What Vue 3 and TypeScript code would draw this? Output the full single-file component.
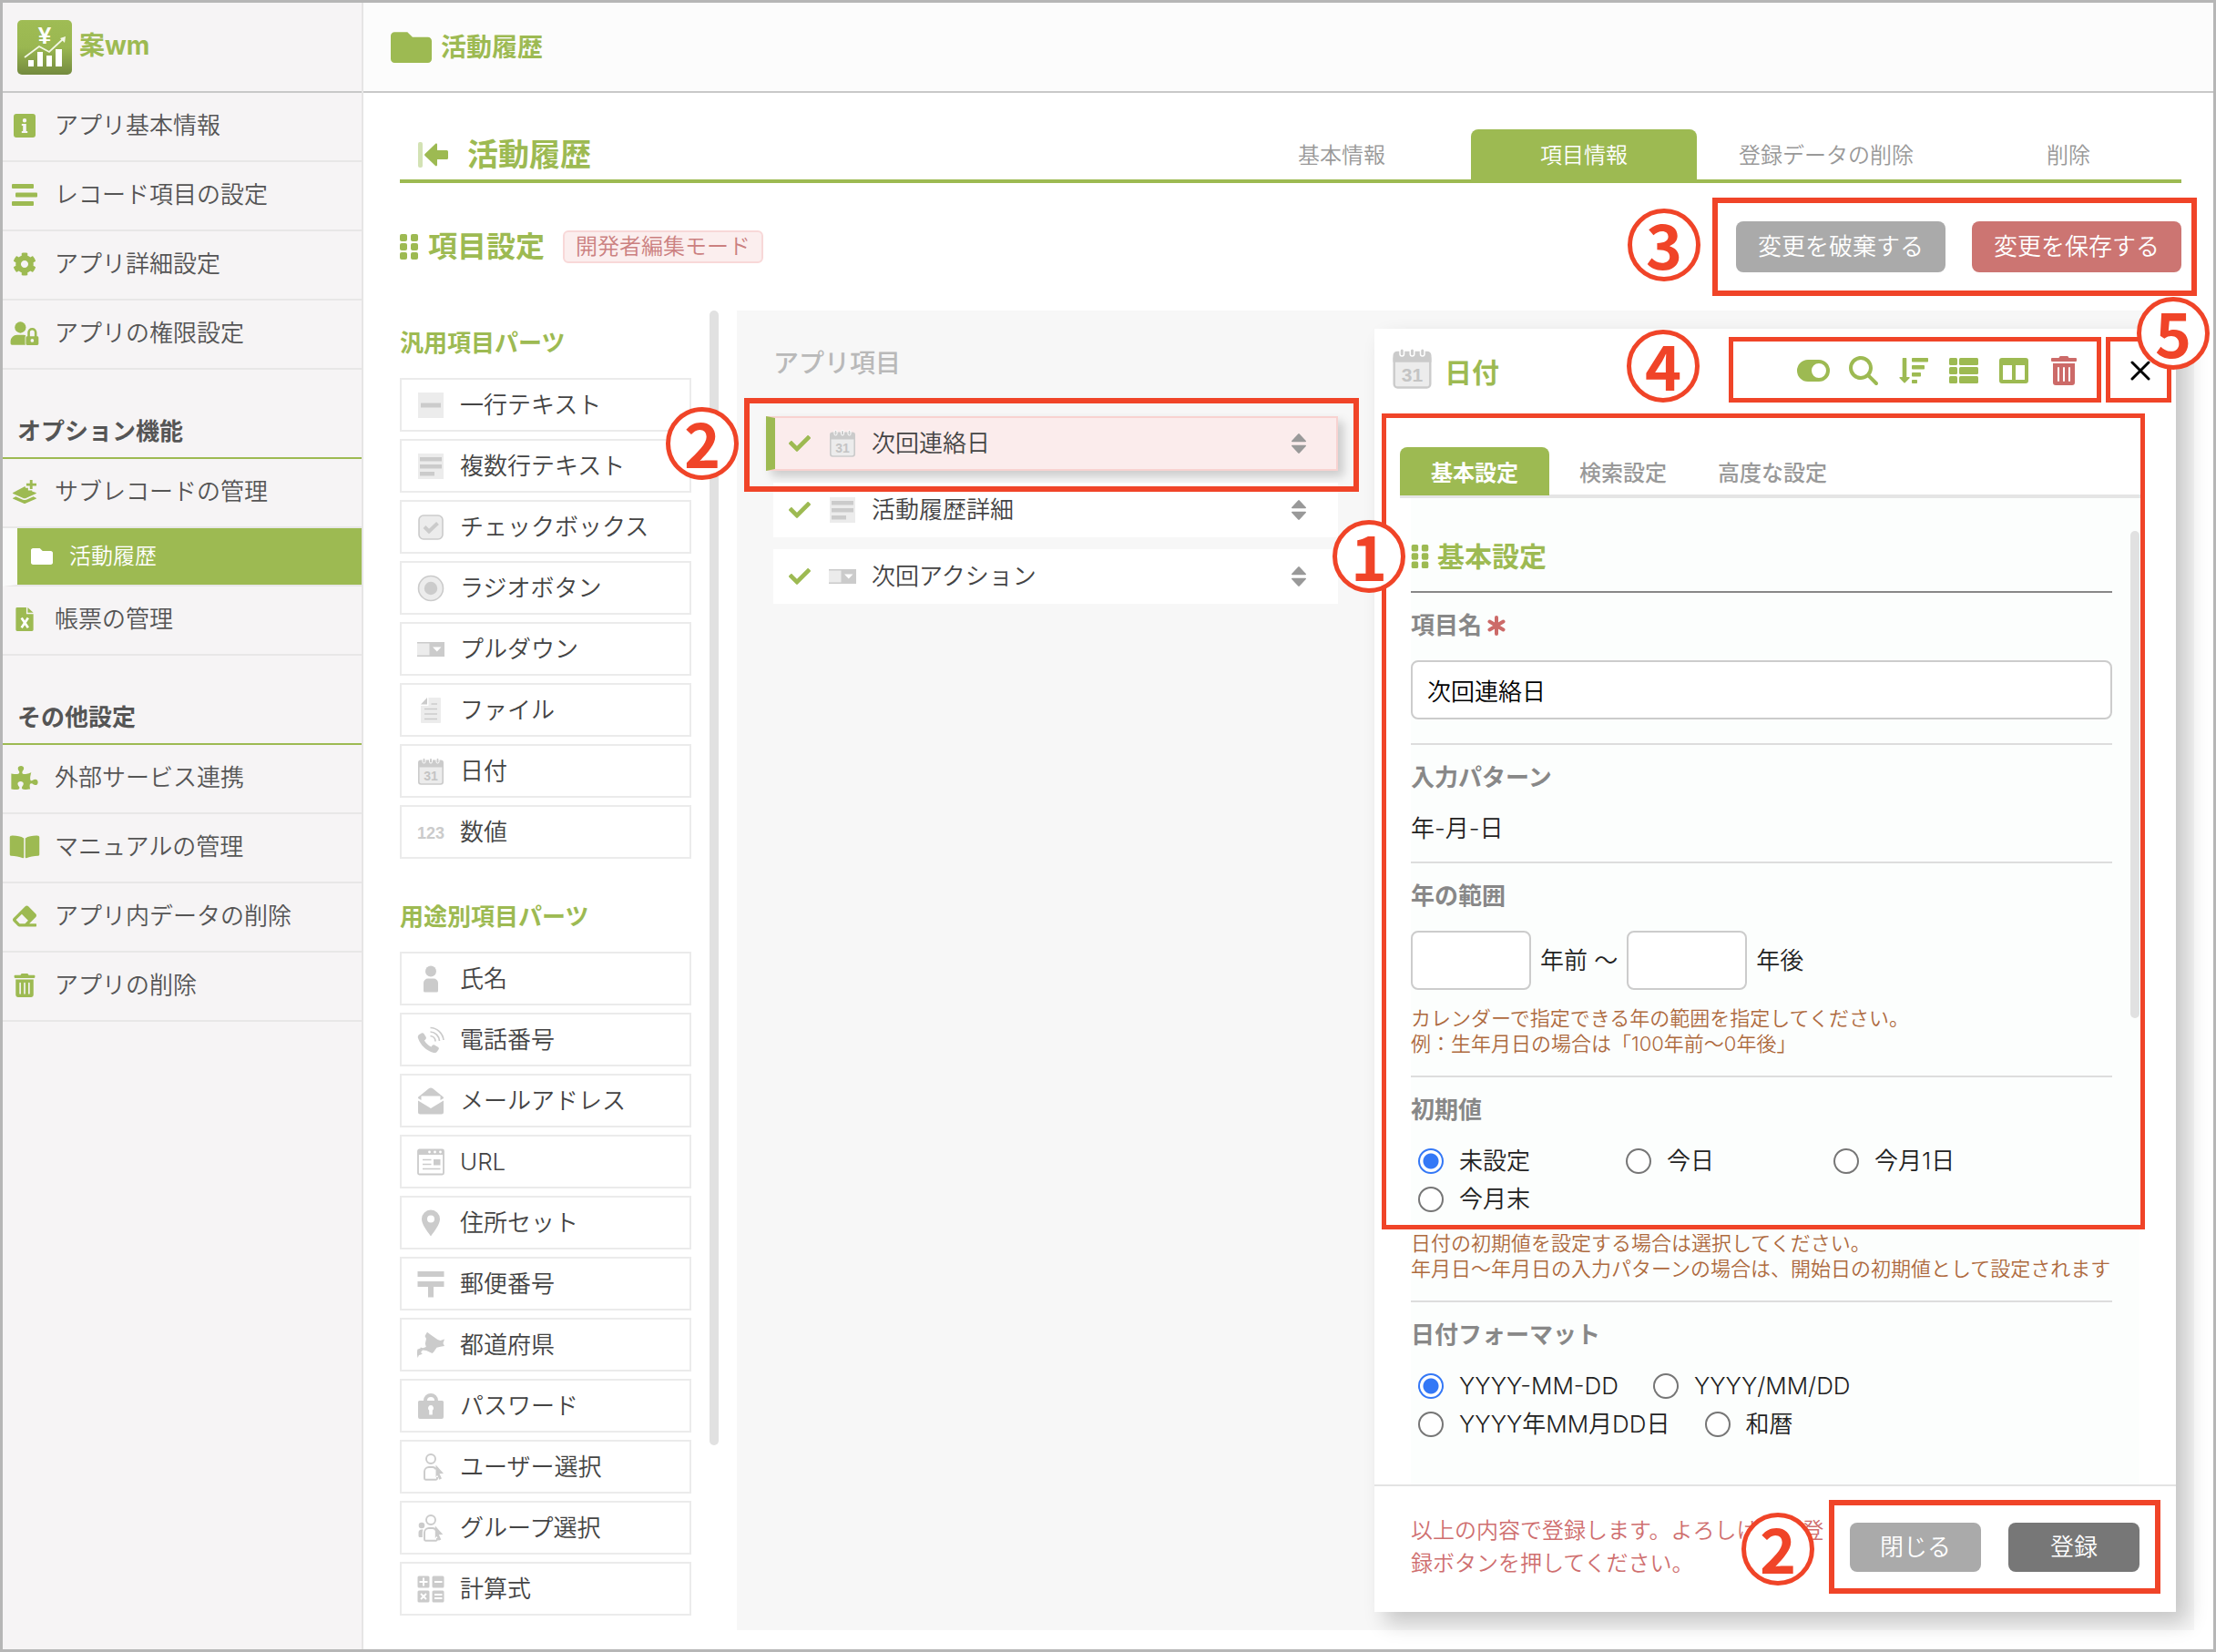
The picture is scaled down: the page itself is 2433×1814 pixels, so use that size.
<script setup lang="ts">
import { ref } from 'vue'

interface Item {
  icon: string
  label: string
}

const basicMenu: Item[] = [
  { icon: 'info', label: 'アプリ基本情報' },
  { icon: 'stream', label: 'レコード項目の設定' },
  { icon: 'cog', label: 'アプリ詳細設定' },
  { icon: 'user-lock', label: 'アプリの権限設定' },
]

const otherMenu: Item[] = [
  { icon: 'puzzle', label: '外部サービス連携' },
  { icon: 'book', label: 'マニュアルの管理' },
  { icon: 'eraser', label: 'アプリ内データの削除' },
  { icon: 'trash', label: 'アプリの削除' },
]

const pageTabs = ['基本情報', '項目情報', '登録データの削除', '削除']
const panelTabs = ['基本設定', '検索設定', '高度な設定']

const partGroups: { title: string; items: Item[] }[] = [
  {
    title: '汎用項目パーツ',
    items: [
      { icon: 'p-text', label: '一行テキスト' },
      { icon: 'p-textarea', label: '複数行テキスト' },
      { icon: 'p-check', label: 'チェックボックス' },
      { icon: 'p-radio', label: 'ラジオボタン' },
      { icon: 'p-select', label: 'プルダウン' },
      { icon: 'p-file', label: 'ファイル' },
      { icon: 'p-date', label: '日付' },
      { icon: 'p-number', label: '数値' },
    ],
  },
  {
    title: '用途別項目パーツ',
    items: [
      { icon: 'p-person', label: '氏名' },
      { icon: 'p-phone', label: '電話番号' },
      { icon: 'p-mail', label: 'メールアドレス' },
      { icon: 'p-url', label: 'URL' },
      { icon: 'p-pin', label: '住所セット' },
      { icon: 'p-post', label: '郵便番号' },
      { icon: 'p-map', label: '都道府県' },
      { icon: 'p-lock', label: 'パスワード' },
      { icon: 'p-user', label: 'ユーザー選択' },
      { icon: 'p-group', label: 'グループ選択' },
      { icon: 'p-calc', label: '計算式' },
    ],
  },
]

const fields: Item[] = [
  { icon: 'p-date', label: '次回連絡日' },
  { icon: 'p-textarea', label: '活動履歴詳細' },
  { icon: 'p-select', label: '次回アクション' },
]

const tools: Item[] = [
  { icon: 'toggle', label: '表示切替' },
  { icon: 'search', label: '検索' },
  { icon: 'sort-down', label: '並び替え' },
  { icon: 'list', label: '一覧' },
  { icon: 'columns', label: '列' },
  { icon: 'trash', label: '削除' },
]

const initialOptions = ['未設定', '今日', '今月1日', '今月末']
const formatOptions = ['YYYY-MM-DD', 'YYYY/MM/DD', 'YYYY年MM月DD日', '和暦']

const fieldName = ref('次回連絡日')
const yearsBefore = ref('')
const yearsAfter = ref('')
const initialValue = ref('未設定')
const dateFormat = ref('YYYY-MM-DD')
</script>

<template>
  <svg class="sprite" aria-hidden="true">
    <symbol id="info" viewBox="0 0 24 26">
      <path fill="currentColor" fill-rule="evenodd" d="M3 0h18a3 3 0 0 1 3 3v20a3 3 0 0 1-3 3H3a3 3 0 0 1-3-3V3a3 3 0 0 1 3-3zM12 5a2.200 2.200 0 1 0 0 4.400A2.200 2.200 0 0 0 12 5zM8.800 11v2h1.400v6H8.800v2h6.400v-2h-1.400v-8z" />
    </symbol>
    <symbol id="stream" viewBox="0 0 28 26">
      <g fill="currentColor">
        <rect x="0" y="1" width="24" height="5" rx="1" />
        <rect x="4" y="10.500" width="24" height="5" rx="1" />
        <rect x="0" y="20" width="24" height="5" rx="1" />
      </g>
    </symbol>
    <symbol id="cog" viewBox="0 0 512 512">
      <path fill="currentColor" d="M487.400 315.700l-42.600-24.600c4.300-23.200 4.300-47 0-70.200l42.600-24.600c4.900-2.800 7.100-8.600 5.500-14-11.100-35.600-30-67.800-54.700-94.600-3.800-4.100-10-5.100-14.800-2.300L380.800 110c-17.900-15.400-38.500-27.300-60.800-35.100V25.800c0-5.600-3.900-10.500-9.400-11.700-36.700-8.200-74.300-7.800-109.200 0-5.500 1.200-9.400 6.100-9.400 11.700V75c-22.200 7.900-42.800 19.800-60.800 35.100L88.700 85.500c-4.900-2.800-11-1.900-14.800 2.300-24.700 26.700-43.600 58.900-54.700 94.600-1.700 5.400.6 11.200 5.500 14L67.300 221c-4.300 23.200-4.300 47 0 70.200l-42.600 24.600c-4.900 2.800-7.100 8.600-5.500 14 11.100 35.600 30 67.800 54.700 94.600 3.800 4.100 10 5.100 14.800 2.300l42.600-24.600c17.900 15.400 38.500 27.300 60.800 35.100v49.200c0 5.600 3.900 10.500 9.400 11.700 36.700 8.200 74.300 7.800 109.200 0 5.500-1.200 9.400-6.100 9.400-11.700v-49.200c22.200-7.900 42.800-19.800 60.800-35.100l42.600 24.600c4.900 2.800 11 1.900 14.800-2.300 24.700-26.700 43.600-58.900 54.700-94.600 1.500-5.500-.7-11.300-5.600-14.100zM256 336c-44.100 0-80-35.900-80-80s35.900-80 80-80 80 35.900 80 80-35.900 80-80 80z" />
    </symbol>
    <symbol id="user-lock" viewBox="0 0 34 28">
      <g fill="currentColor">
        <circle cx="12" cy="7" r="6.600" />
        <path d="M8 16h8c1 0 1.800.3 2.400.8-.5.600-.8 1.400-.8 2.200V26c0 .700.100 1.100.400 1.600H2A1.600 1.600 0 0 1 .4 26v-3A7.500 7.500 0 0 1 8 16z" />
        <path fill-rule="evenodd" d="M20.500 17.500V13a5.500 5.500 0 0 1 11 0v4.500h.5a1.500 1.500 0 0 1 1.500 1.500v7.500a1.500 1.500 0 0 1-1.500 1.500H20a1.500 1.500 0 0 1-1.500-1.500V19a1.500 1.500 0 0 1 1.500-1.500zM23.300 17.500h5.400V13a2.700 2.700 0 0 0-5.400 0zM26 20.500a2 2 0 1 0 0 4 2 2 0 0 0 0-4z" />
      </g>
    </symbol>
    <symbol id="layer-plus" viewBox="0 0 28 27">
      <g fill="currentColor">
        <path d="M20 0h3v3.800h4.500v3H23v3.700h-3V6.800h-4v-3h4z" />
        <path d="M14 7.500l1 .400V9h3v3h4.500v1l4.500 1.500a.7.700 0 0 1 0 1.200l-12 5.200a2.600 2.600 0 0 1-2 0L.8 15.700a.7.700 0 0 1 0-1.200z" />
        <path d="M4 19l8 3.500c1.300.5 2.700.5 4 0l8-3.500 3 1.400a.7.700 0 0 1 0 1.200l-12 5.200a2.600 2.600 0 0 1-2 0L1 21.600a.7.700 0 0 1 0-1.200z" />
      </g>
    </symbol>
    <symbol id="folder" viewBox="0 64 512 384">
      <path fill="currentColor" d="M464 128H272l-64-64H48C21.490 64 0 85.490 0 112v288c0 26.510 21.490 48 48 48h416c26.510 0 48-21.490 48-48V176c0-26.510-21.490-48-48-48z" />
    </symbol>
    <symbol id="file-x" viewBox="0 0 20 27">
      <path fill="currentColor" d="M1.500 0H12v7.500h8v18a1.500 1.500 0 0 1-1.500 1.500h-17A1.500 1.500 0 0 1 0 25.500v-24A1.500 1.500 0 0 1 1.500 0zM13.500 0L20 6h-6.500z" />
      <path fill="none" stroke="#fff" stroke-width="2.800" d="M6.500 12l7.500 11M14 12L6.500 23" />
    </symbol>
    <symbol id="puzzle" viewBox="0 0 576 512">
      <path fill="currentColor" d="M519.442 288.651c-41.519 0-59.500 31.593-82.058 31.593C377.409 320.244 432 144 432 144s-196.288 80-196.288-3.297c0-35.827 36.288-46.250 36.288-85.985C272 19.216 243.885 0 210.539 0c-34.654 0-66.366 18.891-66.366 56.346 0 41.364 31.711 59.277 31.711 81.750C175.885 207.719 0 166.758 0 166.758v333.237s178.635 41.047 178.635-28.662c0-22.473-40-40.107-40-81.471 0-37.456 29.250-56.346 63.577-56.346 33.673 0 61.788 19.216 61.788 54.717 0 39.735-36.288 50.158-36.288 85.985 0 60.803 129.675 25.730 181.230 25.730 0 0-34.725-120.101 25.827-120.101 35.962 0 46.423 36.152 86.308 36.152C556.712 416 576 387.990 576 354.443c0-34.199-18.962-65.792-56.558-65.792z" />
    </symbol>
    <symbol id="book" viewBox="0 0 30 24">
      <path fill="currentColor" d="M14.300 3.200C11 1 6 .4 1.500.6.700.6 0 1.200 0 2v17.500c0 .8.6 1.400 1.400 1.400 4 .1 8.600.7 11.800 2.300.5.200 1.100-.1 1.100-.7zM15.700 3.200C19 1 24 .4 28.500.6c.8 0 1.500.6 1.500 1.400v17.500c0 .8-.6 1.400-1.400 1.400-4 .1-8.600.7-11.800 2.300-.5.200-1.100-.1-1.100-.7z" />
    </symbol>
    <symbol id="eraser" viewBox="0 0 512 512">
      <path fill="currentColor" d="M497.941 273.941c18.745-18.745 18.745-49.137 0-67.882l-160-160c-18.745-18.745-49.136-18.746-67.883 0l-256 256c-18.745 18.745-18.745 49.137 0 67.882l96 96A48.004 48.004 0 0 0 144 480h356c6.627 0 12-5.373 12-12v-40c0-6.627-5.373-12-12-12H355.883l142.058-142.059zm-302.627-62.627l137.373 137.373L265.373 416H150.628l-80-80 124.686-124.686z" />
    </symbol>
    <symbol id="trash" viewBox="0 0 448 512">
      <path fill="currentColor" d="M32 464a48 48 0 0 0 48 48h288a48 48 0 0 0 48-48V128H32zm272-256a16 16 0 0 1 32 0v224a16 16 0 0 1-32 0zm-96 0a16 16 0 0 1 32 0v224a16 16 0 0 1-32 0zm-96 0a16 16 0 0 1 32 0v224a16 16 0 0 1-32 0zM432 32H312l-9.400-18.700A24 24 0 0 0 281.100 0H166.800a23.720 23.720 0 0 0-21.400 13.300L136 32H16A16 16 0 0 0 0 48v32a16 16 0 0 0 16 16h416a16 16 0 0 0 16-16V48a16 16 0 0 0-16-16z" />
    </symbol>
    <symbol id="back" viewBox="0 0 34 28">
      <rect x="0" y="0" width="5" height="28" rx="2" fill="#d3e2b4" />
      <path fill="currentColor" d="M7.500 13L19 2c1-.8 2-.3 2 1v6h10.500A1.500 1.500 0 0 1 33 10.500v7a1.500 1.500 0 0 1-1.500 1.500H21v6c0 1.300-1 1.800-2 1L7.500 15a1.400 1.400 0 0 1 0-2z" />
    </symbol>
    <symbol id="grip" viewBox="0 0 20 28">
      <g fill="currentColor">
        <rect x="0" y="0" width="8" height="8" rx="2" />
        <rect x="12" y="0" width="8" height="8" rx="2" />
        <rect x="0" y="10" width="8" height="8" rx="2" />
        <rect x="12" y="10" width="8" height="8" rx="2" />
        <rect x="0" y="20" width="8" height="8" rx="2" />
        <rect x="12" y="20" width="8" height="8" rx="2" />
      </g>
    </symbol>
    <symbol id="check" viewBox="0 64 512 384">
      <path fill="currentColor" d="M173.898 439.404l-166.400-166.400c-9.997-9.997-9.997-26.206 0-36.204l36.203-36.204c9.997-9.998 26.207-9.998 36.204 0L192 312.690 432.095 72.596c9.997-9.997 26.207-9.997 36.204 0l36.203 36.204c9.997 9.997 9.997 26.206 0 36.204l-294.400 294.401c-9.998 9.997-26.207 9.997-36.204-.001z" />
    </symbol>
    <symbol id="sort" viewBox="0 0 16 22">
      <path fill="currentColor" d="M7.200.5a1.100 1.100 0 0 1 1.600 0l7 7.400c.5.600.1 1.300-.6 1.300H.8C.1 9.200-.3 8.500.2 7.900zM7.200 21.500a1.100 1.100 0 0 0 1.600 0l7-7.400c.5-.6.1-1.300-.6-1.300H.8c-.7 0-1.100.7-.6 1.300z" />
    </symbol>
    <symbol id="toggle" viewBox="0 0 36 32">
      <path fill="currentColor" fill-rule="evenodd" d="M12 4h12a12 12 0 0 1 0 24H12a12 12 0 0 1 0-24zm12 4a8 8 0 1 0 0 16 8 8 0 0 0 0-16z" />
    </symbol>
    <symbol id="search" viewBox="0 0 512 512">
      <path fill="currentColor" d="M416 208c0 45.900-14.900 88.300-40 122.700L502.600 457.400c12.500 12.500 12.500 32.800 0 45.300s-32.800 12.500-45.300 0L330.700 376c-34.400 25.200-76.800 40-122.700 40C93.100 416 0 322.900 0 208S93.100 0 208 0s208 93.100 208 208zM208 352a144 144 0 1 0 0-288 144 144 0 1 0 0 288z" />
    </symbol>
    <symbol id="sort-down" viewBox="0 0 32 32">
      <g fill="currentColor">
        <path d="M4.500 2h3a.8.800 0 0 1 .8.800V23h2.700c.7 0 1 .8.500 1.300l-4.800 5c-.4.400-.9.400-1.300 0l-4.800-5c-.5-.5-.2-1.300.5-1.300h2.600V2.800a.8.800 0 0 1 .8-.8z" />
        <rect x="14" y="2" width="18" height="4.500" rx=".8" />
        <rect x="14" y="10" width="14" height="4.500" rx=".8" />
        <rect x="14" y="18" width="10" height="4.500" rx=".8" />
        <rect x="14" y="26" width="6" height="4" rx=".8" />
      </g>
    </symbol>
    <symbol id="list" viewBox="0 0 32 32">
      <g fill="currentColor">
        <rect x="0" y="2" width="9" height="8" rx="1.500" />
        <rect x="0" y="12" width="9" height="8" rx="1.500" />
        <rect x="0" y="22" width="9" height="8" rx="1.500" />
        <rect x="11" y="2" width="21" height="8" rx="1.500" />
        <rect x="11" y="12" width="21" height="8" rx="1.500" />
        <rect x="11" y="22" width="21" height="8" rx="1.500" />
      </g>
    </symbol>
    <symbol id="columns" viewBox="0 0 32 32">
      <path fill="currentColor" fill-rule="evenodd" d="M3 2h26a3 3 0 0 1 3 3v22a3 3 0 0 1-3 3H3a3 3 0 0 1-3-3V5a3 3 0 0 1 3-3zM4 10v16h10V10zM18 10v16h10V10z" />
    </symbol>
    <symbol id="times" viewBox="0 0 22 22">
      <path fill="none" stroke="currentColor" stroke-width="3" stroke-linecap="round" d="M2 2l18 18M20 2L2 20" />
    </symbol>
    <symbol id="asterisk" viewBox="0 0 20 22">
      <path fill="none" stroke="currentColor" stroke-width="4" stroke-linecap="round" d="M10 2v18M2.500 6.500l15 9M17.500 6.500l-15 9" />
    </symbol>

    <symbol id="p-text" viewBox="0 0 30 30">
      <rect x="1" y="1" width="28" height="28" fill="#ececec" />
      <rect x="4" y="12.500" width="22" height="5" fill="#cbcbcb" />
    </symbol>
    <symbol id="p-textarea" viewBox="0 0 30 30">
      <rect x="1" y="1" width="28" height="28" fill="#ececec" />
      <path fill="#cbcbcb" d="M3 5h24v4.500H3zM3 13h24v4.500H3zM3 21h16v4.500H3z" />
    </symbol>
    <symbol id="p-check" viewBox="0 0 30 30">
      <rect x="2" y="2" width="26" height="26" rx="5" fill="#ececec" stroke="#cbcbcb" stroke-width="1.600" />
      <path fill="none" stroke="#cbcbcb" stroke-width="4" d="M8 14.500l5 5 9.500-9" />
    </symbol>
    <symbol id="p-radio" viewBox="0 0 30 30">
      <circle cx="15" cy="15" r="13.500" fill="#ececec" stroke="#cbcbcb" stroke-width="1.600" />
      <circle cx="15" cy="15" r="7.200" fill="#cbcbcb" />
    </symbol>
    <symbol id="p-select" viewBox="0 0 30 30">
      <rect x="0" y="7" width="30" height="16" fill="#cbcbcb" />
      <rect x="0" y="8.500" width="13.500" height="13" fill="#ececec" />
      <path fill="#fff" d="M17 12.500h9.500l-4.700 5z" />
    </symbol>
    <symbol id="p-file" viewBox="0 0 30 30">
      <path fill="#ececec" d="M12.500 1H25a1 1 0 0 1 1 1v26a1 1 0 0 1-1 1H5a1 1 0 0 1-1-1V10h8.500z" />
      <path fill="#cbcbcb" d="M11 1v7.500H4z" />
      <path stroke="#cbcbcb" stroke-width="1.600" d="M15.500 8H22M8 13.500h14M8 19h14M8 24.500h14" />
    </symbol>
    <symbol id="p-date" viewBox="0 0 30 30">
      <rect x="1.800" y="5" width="26.400" height="24" rx="2.500" fill="#ececec" stroke="#cbcbcb" stroke-width="1.600" />
      <path fill="#cbcbcb" d="M1 10.500V5.500A3 3 0 0 1 4 2.500h22a3 3 0 0 1 3 3v5z" />
      <g fill="#cbcbcb" stroke="#fff" stroke-width="1">
        <rect x="6" y=".5" width="3" height="5.500" rx="1.500" />
        <rect x="13.500" y=".5" width="3" height="5.500" rx="1.500" />
        <rect x="21" y=".5" width="3" height="5.500" rx="1.500" />
      </g>
      <text x="15" y="24.500" text-anchor="middle" font-family="Liberation Sans, sans-serif" font-weight="700" font-size="14" fill="#c4c4c4">31</text>
    </symbol>
    <symbol id="p-number" viewBox="0 0 30 30">
      <text x="15" y="21.500" text-anchor="middle" font-family="Liberation Sans, sans-serif" font-weight="700" font-size="18" fill="#cbcbcb">123</text>
    </symbol>
    <symbol id="p-person" viewBox="0 0 30 30">
      <circle cx="15" cy="6.500" r="6" fill="#cbcbcb" />
      <path fill="#cbcbcb" d="M12 14.500h6a5 5 0 0 1 5 5V28a1.500 1.500 0 0 1-1.500 1.500h-13A1.500 1.500 0 0 1 7 28v-8.500a5 5 0 0 1 5-5z" />
    </symbol>
    <symbol id="p-phone" viewBox="0 0 30 30">
      <path fill="#cbcbcb" d="M1 13c-.6-1.500 0-3 1.200-3.900l2.600-1.600c1-.6 2-.3 2.600.6l2.300 3.700c.5 1 .2 2-.6 2.700l-1.200 1c1.800 3.200 4.300 5.500 7.600 6.900l1-1.300c.6-.8 1.700-1 2.600-.6l3.800 2.200c1 .6 1.200 1.700.7 2.600l-1.700 2.400c-.8 1.200-2.300 1.700-3.800 1.200C9.700 26.700 4 21 1 13z" />
      <path fill="none" stroke="#cbcbcb" stroke-width="1.700" d="M14.500 1.500A15 15 0 0 1 29 15M14.500 6a10.500 10.500 0 0 1 10 10M14.500 10.500a6 6 0 0 1 5.500 6" />
    </symbol>
    <symbol id="p-mail" viewBox="0 0 30 30">
      <path fill="#cbcbcb" d="M1 14.500l14 8.500 14-8.500V27a2.500 2.500 0 0 1-2.500 2.500h-23A2.500 2.500 0 0 1 1 27z" />
      <path fill="#cbcbcb" d="M1 12c0-1 .3-1.600 1-2L12.500 1.500a4 4 0 0 1 5 0L28 10c.7.400 1 1 1 2l-3.500 2V9.500h-21V14z" />
    </symbol>
    <symbol id="p-url" viewBox="0 0 30 30">
      <rect x="1" y="1.500" width="28" height="27" rx="1.500" fill="none" stroke="#cbcbcb" stroke-width="1.800" />
      <path fill="#cbcbcb" d="M1 2h28v5H1zM18 12h7.500v6.500H18z" />
      <path stroke="#cbcbcb" stroke-width="1.500" d="M6 12.500h9.500M6 17.500h9.500M6 22.500h19.500" />
      <g fill="#fff">
        <circle cx="13.500" cy="4" r="1.400" />
        <circle cx="19.500" cy="4" r="1.400" />
        <circle cx="25.500" cy="4" r="1.400" />
      </g>
    </symbol>
    <symbol id="p-pin" viewBox="0 0 30 30">
      <path fill="#cbcbcb" fill-rule="evenodd" d="M15 .5a10 10 0 0 1 10 10c0 6-5.500 12.500-10 19-4.500-6.500-10-13-10-19A10 10 0 0 1 15 .5zm0 6a4 4 0 1 0 0 8 4 4 0 0 0 0-8z" />
    </symbol>
    <symbol id="p-post" viewBox="0 0 30 30">
      <path fill="#cbcbcb" d="M.5 1h29v6H.5zM.5 12h29v6H18v11.500h-6V18H.5z" />
    </symbol>
    <symbol id="p-map" viewBox="0 0 30 30">
      <path fill="#cbcbcb" d="M11 .8l4 3 7.500 5.200 3 1 4.500-1.500-1.500 4.500 1.500 3-4.500.8-4 1-3.500 5-1.500 1.200-6.500-3-4-.500-2 2.500 1.800 1.500-1.800 1-2 .5-1.500 3-.6-4L0 22.500l.3-2.800 3.300-1.200.2-1 2.500.7 3.500-1.200-1-3.500L10 8 8.500 5z" />
    </symbol>
    <symbol id="p-lock" viewBox="0 0 30 30">
      <path fill="#cbcbcb" fill-rule="evenodd" d="M7 9a8 8 0 0 1 16 0h4.500A1.500 1.500 0 0 1 29 10.500V27a2 2 0 0 1-2 2H3a2 2 0 0 1-2-2V10.500A1.500 1.500 0 0 1 2.500 9zM11 9h8a4 4 0 0 0-8 0zM15 14a3.200 3.200 0 0 0-1.800 5.700V24.500h3.600v-4.800A3.200 3.200 0 0 0 15 14z" />
    </symbol>
    <symbol id="p-user" viewBox="0 0 30 30">
      <g fill="none" stroke="#cbcbcb" stroke-width="1.900">
        <circle cx="15" cy="6" r="5" />
        <path d="M20.500 17.500a4 4 0 0 0-3.500-2.500h-4a5 5 0 0 0-5 5v7a1.800 1.800 0 0 0 1.800 1.800h10.700a1.500 1.500 0 0 0 1.500-1.500V26" />
      </g>
      <path fill="#cbcbcb" d="M20.500 12.500l8.500 9.500-4.500.3 2.500 5.200-2.700 1.300-2.200-5-1.600 2.400z" />
    </symbol>
    <symbol id="p-group" viewBox="0 0 30 30">
      <g fill="none" stroke="#cbcbcb" stroke-width="1.900">
        <circle cx="15" cy="6" r="5" />
        <path d="M20.500 17.500a4 4 0 0 0-3.500-2.500h-4a5 5 0 0 0-5 5v7a1.800 1.800 0 0 0 1.800 1.800h10.700a1.500 1.500 0 0 0 1.500-1.500V26" />
      </g>
      <g fill="#cbcbcb">
        <circle cx="5" cy="12" r="3.300" />
        <path d="M5 16.500h1.500c-.5 1-.7 2-.7 3V25H3a1.500 1.500 0 0 1-1.500-1.500V20A3.500 3.500 0 0 1 5 16.500z" />
        <path d="M19.800 12.500l8.500 9.500-4.500.3 2.500 5.200-2.700 1.300-2.200-5-1.600 2.400z" />
      </g>
    </symbol>
    <symbol id="p-calc" viewBox="0 0 30 30">
      <g fill="#cbcbcb">
        <rect x=".5" y=".5" width="13" height="13" rx="1.500" />
        <rect x="16.500" y=".5" width="13" height="13" rx="1.500" />
        <rect x=".5" y="16.500" width="13" height="13" rx="1.500" />
        <rect x="16.500" y="16.500" width="13" height="13" rx="1.500" />
      </g>
      <path stroke="#fff" stroke-width="1.900" d="M7 2.500v9M2.500 7h9M19 7h8.500M4 20l6 6M10 20l-6 6M19 21h8.500M19 25h8.500" />
    </symbol>
  </svg>

  <div class="app">
    <aside class="sidebar">
      <header class="brand">
        <svg class="logo" viewBox="0 0 60 60" aria-hidden="true">
          <defs>
            <linearGradient id="logo-fill" x1="0" y1="0" x2="0" y2="1">
              <stop offset="0" stop-color="#9fbc54" />
              <stop offset=".5" stop-color="#9ab751" />
              <stop offset="1" stop-color="#748a3f" />
            </linearGradient>
          </defs>
          <rect width="60" height="60" rx="5" fill="url(#logo-fill)" />
          <text x="30" y="26" text-anchor="middle" font-family="Liberation Sans, sans-serif" font-weight="700" font-size="26" fill="#fff">¥</text>
          <path fill="#fff" d="M12 44h6v7h-6zM22 35h6v16h-6zM32 39h6v12h-6zM42 32h7v19h-7z" />
          <path fill="none" stroke="#f3f7e6" stroke-width="1.800" d="M8 41l16-12 11 6 15-14" />
          <path fill="#f3f7e6" d="M53 18l-1 7-5-5z" />
        </svg>
        <span class="brand-name">案wm</span>
      </header>
      <nav>
        <a v-for="m in basicMenu" :key="m.label" href="#" class="menu-item">
          <svg class="menu-icon"><use :href="'#' + m.icon" /></svg>{{ m.label }}
        </a>
        <h2 class="menu-heading">オプション機能</h2>
        <a href="#" class="menu-item">
          <svg class="menu-icon"><use href="#layer-plus" /></svg>サブレコードの管理
        </a>
        <a href="#" class="submenu-item">
          <svg class="submenu-icon"><use href="#folder" /></svg>活動履歴
        </a>
        <a href="#" class="menu-item">
          <svg class="menu-icon"><use href="#file-x" /></svg>帳票の管理
        </a>
        <h2 class="menu-heading">その他設定</h2>
        <a v-for="m in otherMenu" :key="m.label" href="#" class="menu-item">
          <svg class="menu-icon"><use :href="'#' + m.icon" /></svg>{{ m.label }}
        </a>
      </nav>
    </aside>

    <div class="content">
      <header class="topbar">
        <svg class="topbar-icon"><use href="#folder" /></svg>
        <span>活動履歴</span>
      </header>

      <main class="main">
        <div class="titlebar">
          <a href="#" class="back" aria-label="戻る"><svg class="back-icon"><use href="#back" /></svg></a>
          <h1 class="title">活動履歴</h1>
          <nav class="page-tabs">
            <a v-for="(t, i) in pageTabs" :key="t" href="#" class="page-tab" :class="{ active: i === 1 }">{{ t }}</a>
          </nav>
        </div>

        <div class="subbar">
          <svg class="grip"><use href="#grip" /></svg>
          <h2 class="subtitle">項目設定</h2>
          <span class="badge">開発者編集モード</span>
          <div class="actions">
            <button type="button" class="btn gray">変更を破棄する</button>
            <button type="button" class="btn red">変更を保存する</button>
            <span class="mark mark-actions"></span>
            <span class="num num-actions">3</span>
          </div>
        </div>

        <div class="workspace">
          <section class="parts">
            <div class="parts-list">
              <div v-for="g in partGroups" :key="g.title" class="part-group">
                <h3 class="part-heading">{{ g.title }}</h3>
                <ul class="part-items">
                  <li v-for="p in g.items" :key="p.label" class="part">
                    <svg class="part-icon"><use :href="'#' + p.icon" /></svg>{{ p.label }}
                  </li>
                </ul>
              </div>
            </div>
            <div class="scroll-track"><div class="parts-thumb"></div></div>
          </section>

          <section class="board">
            <div class="fields">
              <h3 class="fields-heading">アプリ項目</h3>
              <ul class="field-items">
                <li v-for="(f, i) in fields" :key="f.label" class="field" :class="{ selected: i === 0 }">
                  <svg class="field-check"><use href="#check" /></svg>
                  <svg class="part-icon"><use :href="'#' + f.icon" /></svg>
                  <span class="field-label">{{ f.label }}</span>
                  <svg class="field-sort"><use href="#sort" /></svg>
                  <template v-if="i === 0">
                    <span class="mark mark-field"></span>
                    <span class="num num-field">2</span>
                  </template>
                </li>
              </ul>
            </div>

            <form class="panel" @submit.prevent>
              <div class="panel-head">
                <div class="panel-title">
                  <svg class="panel-icon"><use href="#p-date" /></svg>
                  <h3>日付</h3>
                </div>
                <div class="tools">
                  <button v-for="t in tools" :key="t.icon" type="button" class="tool" :class="{ danger: t.icon === 'trash' }" :aria-label="t.label">
                    <svg class="tool-icon"><use :href="'#' + t.icon" /></svg>
                  </button>
                  <span class="mark mark-tools"></span>
                  <span class="num num-tools">4</span>
                </div>
                <div class="closer">
                  <span class="mark mark-close"></span>
                  <span class="num num-close">5</span>
                  <button type="button" class="close" aria-label="閉じる">
                    <svg class="close-icon"><use href="#times" /></svg>
                  </button>
                </div>
              </div>

              <nav class="panel-tabs">
                <a v-for="(t, i) in panelTabs" :key="t" href="#" class="panel-tab" :class="{ active: i === 0 }">{{ t }}</a>
              </nav>

              <div class="panel-body">
                <div class="form">
                  <h4 class="section-title"><svg class="grip small"><use href="#grip" /></svg>基本設定</h4>

                  <div class="row">
                    <label for="field-name" class="label">項目名<svg class="required"><use href="#asterisk" /></svg></label>
                    <input id="field-name" v-model="fieldName" type="text" class="input" />
                  </div>

                  <div class="row tight">
                    <p class="label">入力パターン</p>
                    <p class="value">年-月-日</p>
                  </div>

                  <div class="row">
                    <p class="label">年の範囲</p>
                    <div class="range">
                      <input id="years-before" v-model="yearsBefore" type="text" class="input short" />
                      <label for="years-before">年前 〜</label>
                      <input id="years-after" v-model="yearsAfter" type="text" class="input short" />
                      <label for="years-after">年後</label>
                    </div>
                    <p class="note">カレンダーで指定できる年の範囲を指定してください。<br />例：生年月日の場合は「100年前〜0年後」</p>
                  </div>

                  <div class="row">
                    <p class="label">初期値</p>
                    <div class="options grid">
                      <label v-for="o in initialOptions" :key="o" class="option">
                        <input v-model="initialValue" type="radio" name="initial" :value="o" />{{ o }}
                      </label>
                    </div>
                    <p class="note">日付の初期値を設定する場合は選択してください。<br />年月日〜年月日の入力パターンの場合は、開始日の初期値として設定されます</p>
                  </div>

                  <div class="row last">
                    <p class="label">日付フォーマット</p>
                    <div class="options pairs">
                      <label v-for="o in formatOptions" :key="o" class="option">
                        <input v-model="dateFormat" type="radio" name="format" :value="o" />{{ o }}
                      </label>
                    </div>
                  </div>
                </div>
                <div class="scroll-track"><div class="form-thumb"></div></div>
              </div>

              <div class="panel-foot">
                <p class="confirm">以上の内容で登録します。よろしければ登録ボタンを押してください。</p>
                <div class="foot-actions">
                  <span class="mark mark-foot"></span>
                  <span class="num num-foot">2</span>
                  <button type="button" class="btn foot gray">閉じる</button>
                  <button type="submit" class="btn foot dark">登録</button>
                </div>
              </div>

              <span class="mark mark-form"></span>
              <span class="num num-form">1</span>
            </form>
          </section>
        </div>
      </main>
    </div>
  </div>
</template>

<style>
body {
  background: #fff;
}
</style>

<style scoped>
* {
  box-sizing: border-box;
  margin: 0;
  padding: 0;
}
svg {
  display: block;
  flex: none;
}
.sprite {
  display: none;
}
ul {
  list-style: none;
}
a {
  color: inherit;
  text-decoration: none;
}
button,
input {
  font: inherit;
}
.app {
  --green: #9dba52;
  --mark: #f04428;
  display: flex;
  min-height: 100vh;
  border: 3px solid #b6b6b6;
  color: #222;
  font-family: Inter, "Noto Sans CJK JP", sans-serif;
  font-size: 26px;
  font-weight: 350;
  line-height: 36px;
}

/* sidebar */
.sidebar {
  flex: none;
  width: 396px;
  border-right: 2px solid #e6e5e5;
  background: #f6f4f5;
  color: #555;
}
.brand,
.topbar {
  display: flex;
  align-items: center;
  height: 99px;
  border-bottom: 2px solid #c8c8c8;
  color: var(--green);
  font-size: 28px;
  font-weight: 700;
}
.brand {
  gap: 8px;
  padding-left: 16px;
}
.logo {
  width: 60px;
  height: 60px;
}
.brand-name {
  padding-bottom: 3px;
}
.menu-item {
  display: flex;
  align-items: center;
  gap: 16px;
  height: 76px;
  padding: 0 0 2px 7px;
  border-bottom: 2px solid #e8e7e7;
}
.menu-icon {
  width: 34px;
  height: 26px;
  color: var(--green);
}
.menu-heading {
  height: 98px;
  padding: 50px 0 0 16px;
  border-bottom: 2px solid var(--green);
  font-size: 26px;
  font-weight: 700;
}
.submenu-item {
  display: flex;
  align-items: center;
  gap: 18px;
  height: 64px;
  border-bottom: 2px solid #e8e7e7;
  border-left: 16px solid #fafafa;
  padding-left: 15px;
  background: var(--green);
  color: #fff;
  font-size: 24px;
}
.submenu-icon {
  width: 24px;
  height: 18px;
}

/* content */
.content {
  flex: 1;
  min-width: 0;
}
.topbar {
  gap: 10px;
  padding-left: 30px;
  background: #fcfcfc;
}
.topbar-icon {
  width: 45px;
  height: 34px;
}
.main {
  padding: 40px 21px 20px 40px;
}
.titlebar {
  display: flex;
  align-items: center;
  height: 59px;
  margin-right: 14px;
  border-bottom: 4px solid var(--green);
}
.back {
  margin-left: 20px;
  color: var(--green);
}
.back-icon {
  width: 34px;
  height: 28px;
}
.title {
  flex: 1;
  margin-left: 20px;
  color: var(--green);
  font-size: 34px;
  font-weight: 700;
}
.page-tabs {
  display: flex;
  gap: 18px;
}
.page-tab {
  width: 248px;
  height: 55px;
  border-radius: 8px 8px 0 0;
  color: #999;
  font-size: 24px;
  line-height: 57px;
  text-align: center;
}
.page-tab.active {
  background: var(--green);
  color: #fff;
}
.subbar {
  display: flex;
  align-items: center;
  height: 56px;
  margin: 42px 14px 42px 0;
}
.grip {
  width: 20px;
  height: 28px;
  color: var(--green);
}
.subtitle {
  margin: 0 20px 0 11px;
  color: var(--green);
  font-size: 32px;
  font-weight: 700;
}
.badge {
  padding: 0 12px;
  border: 2px solid #f8d8d8;
  border-radius: 6px;
  background: #fbeeee;
  color: #cb8080;
  font-size: 24px;
  line-height: 32px;
}
.actions {
  position: relative;
  display: flex;
  gap: 29px;
  margin-left: auto;
}
.btn {
  width: 230px;
  height: 56px;
  border: 0;
  border-radius: 8px;
  color: #fff;
  line-height: 36px;
}
.btn.gray {
  background: #aaa;
}
.btn.red {
  background: #cc7572;
}
.btn.dark {
  background: #777;
}
.btn.foot {
  width: 144px;
  height: 54px;
}
.workspace {
  display: flex;
  gap: 20px;
}

/* scroll bars */
.scroll-track {
  flex: none;
  width: 10px;
}
.parts-thumb,
.form-thumb {
  border-radius: 5px;
  background: #e1e1e1;
}
.parts-thumb {
  height: 86%;
}
.form-thumb {
  width: 10px;
  height: 535px;
  margin-top: 36px;
}

/* parts */
.parts {
  display: flex;
  flex: none;
  gap: 20px;
}
.parts-list {
  width: 320px;
}
.part-group {
  padding-top: 18px;
}
.part-group + .part-group {
  padding-top: 46px;
}
.part-heading {
  margin-bottom: 20px;
  color: var(--green);
  font-size: 26px;
  font-weight: 700;
}
.part-items {
  display: flex;
  flex-direction: column;
  gap: 8px;
}
.part {
  display: flex;
  align-items: center;
  gap: 17px;
  height: 59px;
  padding-left: 17px;
  border: 2px solid #ebebeb;
  background: #fff;
  color: #444;
}
.part-icon {
  width: 30px;
  height: 30px;
}

/* board */
.board {
  display: flex;
  flex: 1;
  align-items: flex-start;
  min-width: 0;
  background: #f7f7f7;
}
.fields {
  flex: 1;
  min-width: 0;
  padding: 40px 40px 0;
}
.fields-heading {
  margin-bottom: 40px;
  color: #b9b9b9;
  font-size: 28px;
  font-weight: 500;
}
.field-items {
  display: flex;
  flex-direction: column;
  gap: 13px;
}
.field {
  display: flex;
  align-items: center;
  height: 60px;
  padding: 0 34px 0 17px;
  background: #fff;
  color: #444;
}
.field.selected {
  position: relative;
  z-index: 1;
  margin-left: -8px;
  padding: 0 32px 0 15px;
  border: 2px solid #f8d2d0;
  border-left: 10px solid var(--green);
  background: #fbecec;
  box-shadow: 6px 6px 10px rgba(0, 0, 0, 0.18);
}
.field-check {
  width: 24px;
  height: 18px;
  margin-right: 20px;
  color: var(--green);
}
.field-label {
  flex: 1;
  margin-left: 17px;
}
.field-sort {
  width: 18px;
  height: 22px;
  color: #999;
}

/* settings panel */
.panel {
  position: relative;
  flex: none;
  width: 55%;
  margin: 20px 20px 20px 0;
  background: #fff;
  box-shadow: 12px 12px 22px rgba(0, 0, 0, 0.2);
}
.panel-head {
  display: flex;
  padding: 21px 12px 0 19px;
}
.panel-title {
  display: flex;
  flex: 1;
  gap: 13px;
  align-items: flex-end;
  height: 45px;
  color: var(--green);
  font-weight: 700;
}
.panel-title h3 {
  font-size: 30px;
}
.panel-icon {
  width: 45px;
  height: 45px;
}
.tools,
.closer {
  position: relative;
  display: flex;
  height: 50px;
}
.closer {
  margin-left: 29px;
}
.tool,
.close {
  display: flex;
  align-items: center;
  justify-content: center;
  width: 55px;
  border: 0;
  background: none;
  color: var(--green);
}
.tool.danger {
  color: #cc6a68;
}
.tool-icon {
  width: 36px;
  height: 32px;
}
.close {
  color: #000;
}
.close-icon {
  width: 22px;
  height: 22px;
}
.panel-tabs {
  display: flex;
  height: 56px;
  margin: 59px 39px 0 28px;
  border-bottom: 4px solid #e5e5e5;
}
.panel-tab {
  height: 53px;
  padding: 0 28px;
  border-radius: 8px 8px 0 0;
  color: #999;
  font-size: 24px;
  font-weight: 500;
  line-height: 58px;
}
.panel-tab.active {
  margin-right: 5px;
  padding: 0 34px;
  background: var(--green);
  color: #fff;
  font-weight: 700;
}
.panel-body {
  display: flex;
  margin: 0 40px;
  background: #fcfefd;
}
.form {
  flex: 1;
  min-width: 0;
  margin-right: 20px;
}
.section-title {
  display: flex;
  align-items: center;
  gap: 9px;
  padding: 46px 0 20px;
  border-bottom: 2px solid #888;
  color: var(--green);
  font-size: 30px;
  font-weight: 700;
}
.grip.small {
  height: 26px;
}
.row {
  padding: 18px 0 26px;
  border-bottom: 2px solid #ddd;
}
.row.tight {
  padding-bottom: 18px;
}
.row.last {
  padding-bottom: 45px;
  border: 0;
}
.row:has(.note) {
  padding-bottom: 21px;
}
.label {
  display: flex;
  align-items: center;
  gap: 6px;
  color: #888;
  font-weight: 700;
}
.required {
  width: 20px;
  height: 22px;
  color: #cc6a68;
}
.value {
  margin-top: 20px;
}
.input {
  display: block;
  width: 100%;
  height: 65px;
  margin-top: 20px;
  padding: 0 16px;
  border: 2px solid #ccc;
  border-radius: 8px;
  background: #fff;
  color: #000;
  outline: 0;
}
.range {
  display: flex;
  align-items: center;
  gap: 10px;
  margin-top: 20px;
}
.input.short {
  width: 132px;
  margin-top: 0;
}
.note {
  margin-top: 17px;
  color: #ae6a3e;
  font-size: 22px;
  line-height: 28px;
  white-space: nowrap;
}
.options {
  display: flex;
  flex-wrap: wrap;
  margin-top: 17px;
}
.options + .note {
  margin-top: 13px;
}
.option {
  display: flex;
  align-items: center;
  height: 42px;
  white-space: nowrap;
}
.option input {
  flex: none;
  width: 28px;
  height: 28px;
  margin: 0 17px 0 8px;
  border: 2px solid #767676;
  border-radius: 50%;
  background: #fff;
  appearance: none;
}
.option input:checked {
  border-color: #3478f6;
  background: radial-gradient(circle, #3478f6 8px, #fff 9px);
}
.grid .option {
  width: 228px;
}
.pairs {
  column-gap: 30px;
  padding-right: 100px;
}
.panel-foot {
  display: flex;
  align-items: center;
  gap: 24px;
  padding: 31px 40px 35px;
  border-top: 2px solid #e3e3e3;
}
.confirm {
  flex: 1;
  color: #cf6f6f;
  font-size: 24px;
}
.foot-actions {
  position: relative;
  display: flex;
  gap: 30px;
}

/* numbered callouts laid over the screen */
.mark {
  position: absolute;
  border: 6px solid var(--mark);
  pointer-events: none;
}
.num {
  position: absolute;
  z-index: 2;
  width: 80px;
  height: 80px;
  border: 5px solid var(--mark);
  border-radius: 50%;
  background: #fff;
  color: var(--mark);
  font-family: "Noto Sans CJK JP", sans-serif;
  font-size: 68px;
  font-weight: 700;
  line-height: 66px;
  text-align: center;
  pointer-events: none;
}
.mark-actions {
  inset: -26px -17px -26px -26px;
}
.num-actions {
  top: -14px;
  left: -119px;
}
.mark-field {
  inset: -22px -25px -25px -34px;
}
.num-field {
  top: -12px;
  left: -120px;
}
.mark-tools {
  inset: -12px -14px -10px -65px;
}
.num-tools {
  top: -20px;
  left: -177px;
}
.mark-close {
  inset: -12px -7px -10px -10px;
}
.num-close {
  top: -56px;
  left: 24px;
}
.mark-form {
  top: 93px;
  right: 34px;
  left: 8px;
  height: 896px;
}
.num-form {
  top: 210px;
  left: -46px;
}
.mark-foot {
  inset: -25px -23px -24px -23px;
}
.num-foot {
  top: -11px;
  left: -119px;
}
.mark-tools,
.mark-close,
.mark-form {
  border-width: 5px;
}
</style>
